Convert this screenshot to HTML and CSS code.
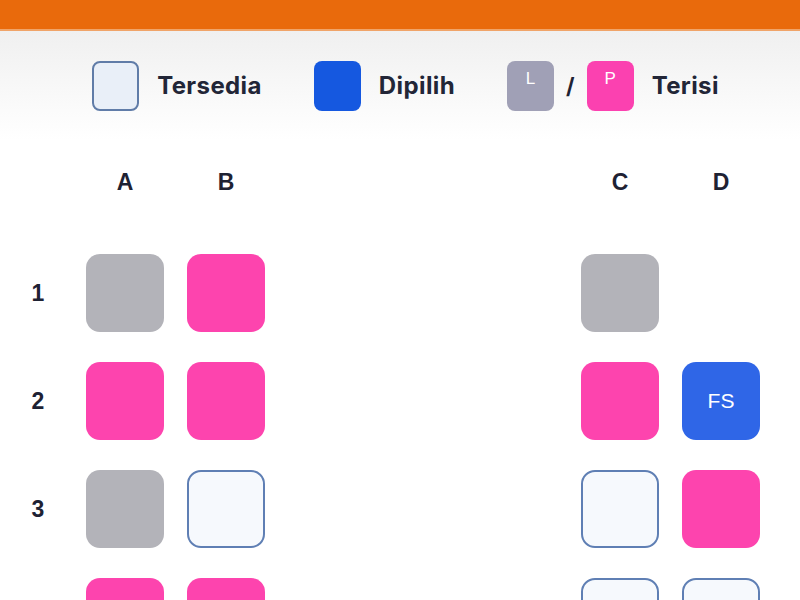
FILE: index.html
```html
<!DOCTYPE html>
<html lang="id">
<head>
  <meta charset="UTF-8" />
  <meta name="viewport" content="width=device-width, initial-scale=1" />
  <title>Pilih Kursi</title>
  <link rel="stylesheet" href="styles.css">
</head>
<body>
  <header class="topbar"></header>

  <section class="legend">
    <div class="legend-item">
      <span class="swatch swatch-free"></span>
      <span class="legend-text">Tersedia</span>
    </div>
    <div class="legend-item">
      <span class="swatch swatch-picked"></span>
      <span class="legend-text">Dipilih</span>
    </div>
    <div class="legend-item">
      <span class="swatch swatch-male">L</span>
      <span class="slash">/</span>
      <span class="swatch swatch-female">P</span>
      <span class="legend-text">Terisi</span>
    </div>
  </section>

  <main class="seatmap">
    <div class="row-label"></div>
    <div class="col-label">A</div>
    <div class="col-label">B</div>
    <div class="aisle"></div>
    <div class="col-label">C</div>
    <div class="col-label">D</div>

    <div class="row-label">1</div>
    <div class="seat taken-l"></div>
    <div class="seat taken-p"></div>
    <div class="aisle"></div>
    <div class="seat taken-l"></div>
    <div class="seat none"></div>

    <div class="row-label">2</div>
    <div class="seat taken-p"></div>
    <div class="seat taken-p"></div>
    <div class="aisle"></div>
    <div class="seat taken-p"></div>
    <div class="seat picked">FS</div>

    <div class="row-label">3</div>
    <div class="seat taken-l"></div>
    <div class="seat free"></div>
    <div class="aisle"></div>
    <div class="seat free"></div>
    <div class="seat taken-p"></div>

    <div class="row-label"></div>
    <div class="seat taken-p"></div>
    <div class="seat taken-p"></div>
    <div class="aisle"></div>
    <div class="seat free"></div>
    <div class="seat free"></div>
  </main>
</body>
</html>
```

FILE: styles.css
```css
body {
  margin: 0;
  background: #fff;
  color: #1e2233;
  font-family: 'Liberation Sans', Arial, sans-serif;
  overflow: hidden;
}
.topbar {
  height: 29px;
  background: #e96a0c;
  border-bottom: 2px solid #f0a469;
}
/* legend strip */
.legend {
  height: 109px;
  background: linear-gradient(#f0f0f0, #ffffff);
  display: flex;
  justify-content: center;
  align-items: center;
  gap: 52px;
  padding-left: 11px;
  box-sizing: border-box;
}
.legend-item {
  display: flex;
  align-items: center;
  gap: 18px;
}
.legend-text {
  font-family: 'Inter', 'Open Sans', sans-serif;
  font-weight: 700;
  font-size: 24px;
  letter-spacing: 0.4px;
  color: #222637;
}
.swatch {
  width: 47px;
  height: 50px;
  border-radius: 8px;
  box-sizing: border-box;
  color: #fff;
  font-size: 17px;
  text-align: center;
  padding-top: 8px;
}
.swatch-free {
  background: #e9eff8;
  border: 2px solid #607ca8;
}
.swatch-picked {
  background: #1558e0;
}
.swatch-male {
  background: #a0a0b6;
}
.swatch-female {
  background: #fb41b0;
}
.slash {
  font-family: 'Inter', sans-serif;
  font-weight: 700;
  font-size: 22px;
  margin: 0 -6px;
}
/* seat grid */
.seatmap {
  display: grid;
  grid-template-columns: 63px 78px 78px 270px 78px 78px;
  grid-template-rows: 84px repeat(4, 78px);
  column-gap: 23px;
  row-gap: 30px;
}
.col-label,
.row-label {
  display: flex;
  align-items: center;
  justify-content: center;
  font-weight: 700;
  font-size: 23px;
  color: #1e2233;
}
.row-label {
  padding-left: 13px;
}
.seat {
  border-radius: 14px;
  box-sizing: border-box;
  display: flex;
  align-items: center;
  justify-content: center;
  color: #fff;
  font-size: 21px;
}
.taken-l {
  background: #b3b3b9;
}
.taken-p {
  background: #fd44ae;
}
.picked {
  background: #2f66e7;
}
.free {
  background: #f6f9fd;
  border: 2px solid #5f7fb4;
}
.none {
  background: transparent;
}
```
